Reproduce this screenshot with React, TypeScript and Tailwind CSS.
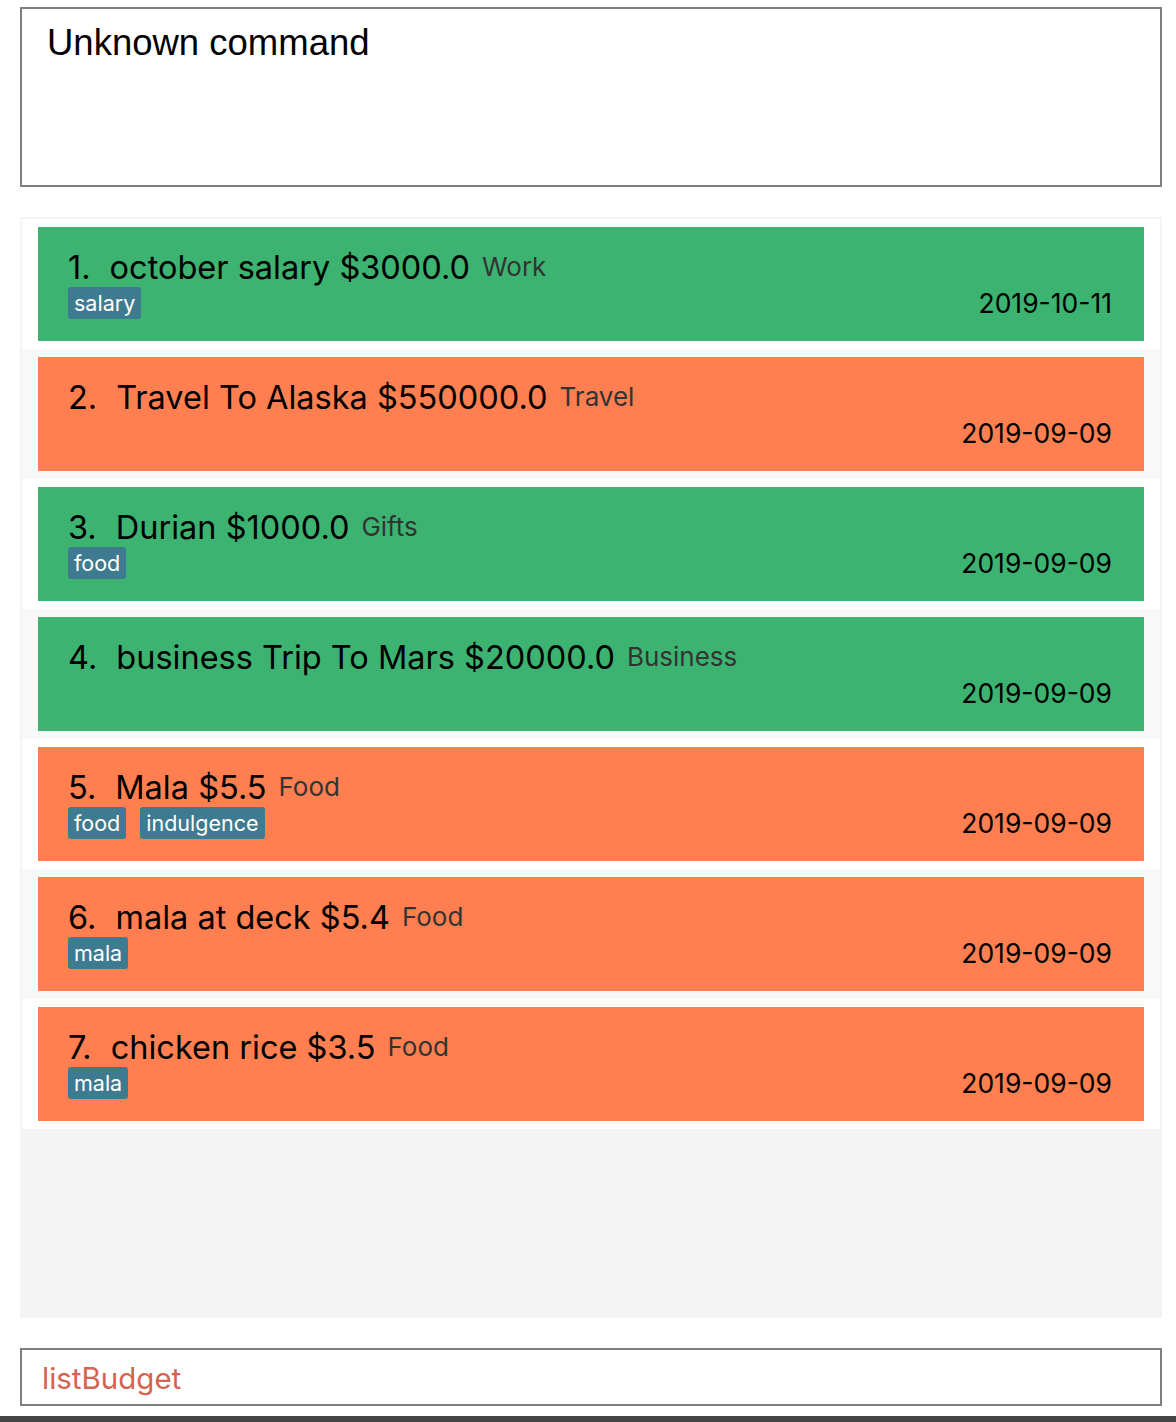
import React from 'react'

type Entry = {
  name: string
  amount: string
  category: string
  date: string
  tags: string[]
  income: boolean
}

const entries: Entry[] = [
  { name: 'october salary', amount: '$3000.0', category: 'Work', date: '2019-10-11', tags: ['salary'], income: true },
  { name: 'Travel To Alaska', amount: '$550000.0', category: 'Travel', date: '2019-09-09', tags: [], income: false },
  { name: 'Durian', amount: '$1000.0', category: 'Gifts', date: '2019-09-09', tags: ['food'], income: true },
  { name: 'business Trip To Mars', amount: '$20000.0', category: 'Business', date: '2019-09-09', tags: [], income: true },
  { name: 'Mala', amount: '$5.5', category: 'Food', date: '2019-09-09', tags: ['food', 'indulgence'], income: false },
  { name: 'mala at deck', amount: '$5.4', category: 'Food', date: '2019-09-09', tags: ['mala'], income: false },
  { name: 'chicken rice', amount: '$3.5', category: 'Food', date: '2019-09-09', tags: ['mala'], income: false },
]

const EntryCard = ({ entry, index }: { entry: Entry; index: number }) => (
  <div className={`h-[130px] py-[8px] pl-[16px] pr-[16px] ${index % 2 === 0 ? 'bg-white' : 'bg-[#f8f8f8]'}`}>
    <div className={`h-[114px] flex flex-col pl-[30px] pr-[32px] pt-[21px] ${entry.income ? 'bg-[#3cb371]' : 'bg-[#ff7f50]'}`}>
      <div className='flex items-baseline h-[40px] leading-[40px]'>
        <span className='text-[32.5px] text-black'>{index + 1}.</span>
        <span className='text-[32.5px] text-black ml-[19px]'>{entry.name} {entry.amount}</span>
        <span className='text-[26px] text-[#333333] ml-[12px] -translate-y-[3px]'>{entry.category}</span>
      </div>
      <div className='flex items-center justify-between -mt-[1px]'>
        <div className='flex gap-[14px] h-[32px]'>
          {entry.tags.map((tag) => (
            <span key={tag} className='h-[32px] leading-[32px] px-[6px] rounded-[3px] bg-[#3e7b91] text-white text-[21.5px]'>
              {tag}
            </span>
          ))}
        </div>
        <span className='text-[26.5px] text-black leading-[32px]'>{entry.date}</span>
      </div>
    </div>
  </div>
)

export default function App() {
  return (
    <div className='w-[1176px] h-[1422px] bg-white flex flex-col' style={{ fontFamily: 'Inter, "Noto Sans", sans-serif' }}>
      <div className='ml-[20px] mr-[14px] mt-[7px] h-[180px] border-2 border-[#7f7f7f] pl-[25px] pt-[14px]'>
        <p className='text-[36.5px] leading-[40px] text-black' style={{ fontFamily: '"Liberation Sans", Arial, sans-serif' }}>
          Unknown command
        </p>
      </div>

      <div className='ml-[20px] mr-[14px] mt-[30px] h-[1101px] bg-[#f4f4f4] p-[2px]'>
        {entries.map((entry, i) => (
          <EntryCard key={i} entry={entry} index={i} />
        ))}
      </div>

      <div className='ml-[20px] mr-[14px] mt-[30px] h-[58px] border-2 border-[#7f7f7f] pl-[20px] flex items-center'>
        <span className='text-[29.5px] text-[#d4634f] translate-y-[1px]'>listBudget</span>
      </div>

      <div className='mt-auto h-[6px] bg-[#444444]' />
    </div>
  )
}
